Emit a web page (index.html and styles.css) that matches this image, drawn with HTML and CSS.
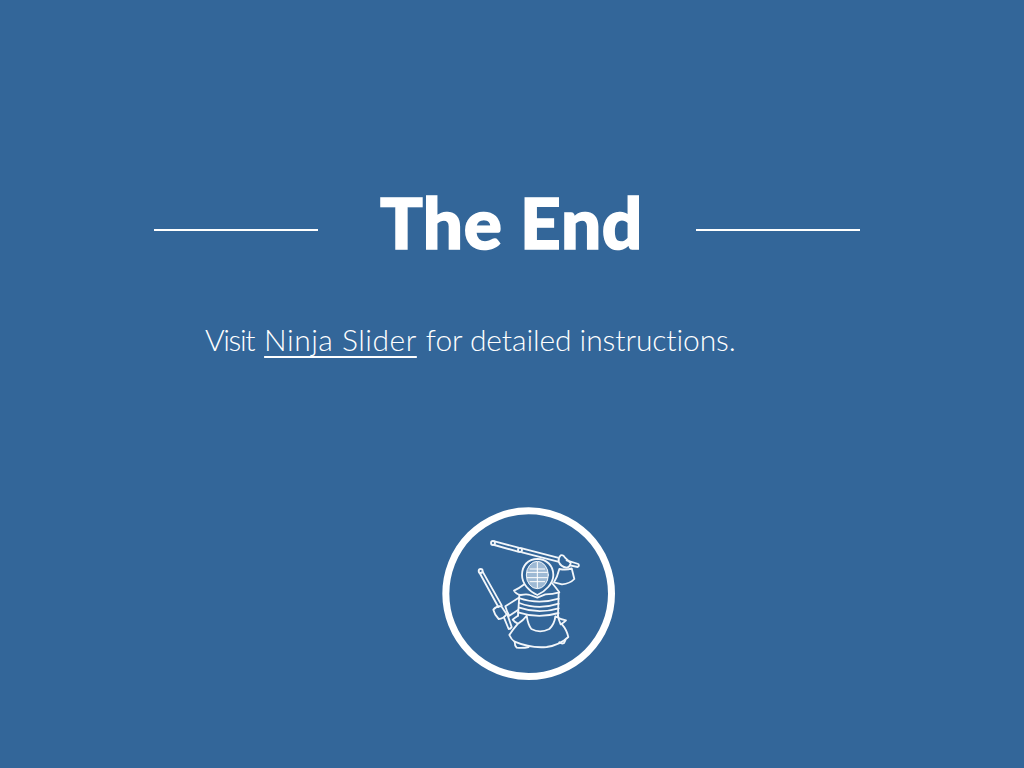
FILE: index.html
```html
<!DOCTYPE html>
<html lang="en">
<head>
<meta charset="utf-8">
<title>The End</title>
<link rel="stylesheet" href="styles.css">
</head>
<body>
<main class="slide">
  <header class="heading">
    <span class="rule"></span>
    <h1 class="title">The End</h1>
    <span class="rule"></span>
  </header>
  <p class="lead"><span class="lead-start">Visit</span> <a class="link" href="#">Ninja Slider</a> for detailed instructions.</p>
  <svg class="emblem" viewBox="0 0 588 588" width="196" height="196" aria-label="Ninja Slider logo">
    <circle class="ring" cx="296" cy="296" r="248.5"/>
    <g class="ink">
      <!-- upper sword -->
      <circle cx="189" cy="144" r="6"/>
      <circle cx="270" cy="165" r="6"/>
      <path d="M194 139 L265 158 M276 160 L383 188 M410 196 L445 207 Q449 213 443 216 L420 211 M193 150 L264 170 M276 172 L384 200"/>
      <!-- raised hand and sleeve -->
      <path d="M386 200 Q384 188 392 181 Q400 178 405 188 L422 204 Q420 216 410 218 Q392 216 386 200 Z"/>
      <path d="M388 222 Q410 226 425 220 L433 252 Q420 266 396 268 L372 262 Q382 246 388 222 Z"/>
      <!-- helmet -->
      <path d="M322 192 C350 192 370 212 370 240 C370 266 345 290 322 300 C298 290 276 266 276 240 C276 212 294 192 322 192 Z"/>
      <ellipse class="grille" cx="322" cy="240" rx="33" ry="41"/>
      <path class="bars" d="M322 202 V279 M300 222 H344 M292 232 H352 M292 248 H352 M300 260 H344"/>
      <!-- shoulders -->
      <path d="M283 268 Q268 280 252 287 Q258 298 272 300 Q290 296 300 300 L322 308 L346 298 Q368 298 388 292 Q378 278 366 264"/>
      <!-- torso bands -->
      <path d="M266 309 Q325 330 386 311 M268 324 Q325 346 386 326 M268 338 Q325 358 386 340 M264 352 Q325 372 386 354"/>
      <path d="M268 300 L264 362 M386 294 L384 362"/>
      <!-- left arm and glove -->
      <path d="M264 310 L226 334 Q230 350 238 362 L264 345"/>
      <path d="M190 344 Q200 332 214 334 L230 358 Q220 372 206 372 Q194 360 190 344 Z"/>
      <!-- left sword -->
      <circle cx="152" cy="228" r="6"/>
      <path d="M149 234 L205 336 M158 230 L215 331 M222 368 L236 402 Q242 402 245 396 L232 358"/>
      <!-- tare and hakama -->
      <path d="M264 362 Q254 368 248 374 Q256 384 264 386 Q280 376 290 362 Q294 390 304 402 Q330 416 358 402 Q374 386 376 364 Q392 374 408 376 Q400 384 392 388 Q386 376 384 362"/>
      <path d="M262 388 Q248 404 238 420 Q244 434 254 440 Q300 460 350 456 Q390 450 415 426 Q410 404 396 388"/>
      <path d="M254 440 Q254 452 260 458 Q280 460 296 456 M388 442 Q396 448 402 444 L406 436"/>
    </g>
  </svg>
</main>
</body>
</html>
```
FILE: styles.css
```css
* { box-sizing: border-box; }
html, body { margin: 0; height: 100%; }
body { background: #336699; color: #fff; overflow: hidden; }
.slide { width: 1024px; height: 768px; padding-top: 181px; }
.heading { display: flex; align-items: center; width: 706px; margin-left: 154px; height: 98px; }
.rule { flex: 0 0 164px; height: 2px; background: #fff; }
.title { flex: 1; margin: 0; padding: 0 0 16px 9px; text-align: center; font: 900 71px/80px Lato, "Liberation Sans", sans-serif; letter-spacing: 0.7px; -webkit-text-stroke: 1.6px #fff; }
.lead { margin: 40px 0 0; padding-left: 205px; font: 300 30px/40px Lato, "Liberation Sans", sans-serif; font-variant-ligatures: none; letter-spacing: -0.1px; white-space: nowrap; }
.lead-start { letter-spacing: -1.4px; }
.link { margin: 0 1px 0 2px; color: #fff; letter-spacing: 0.5px; text-decoration: underline; text-decoration-thickness: 2px; text-underline-offset: 5px; text-decoration-skip-ink: none; }
.emblem { display: block; margin: 136px 0 0 430px; }
.ring { fill: none; stroke: #fff; stroke-width: 21; }
.ink { fill: none; stroke: #f2f6fa; stroke-width: 5.5; stroke-linejoin: round; stroke-linecap: round; filter: blur(0.4px); }
.grille { fill: #9db9d4; stroke-width: 3; }
.bars { stroke: #fff; stroke-width: 3; }
```
